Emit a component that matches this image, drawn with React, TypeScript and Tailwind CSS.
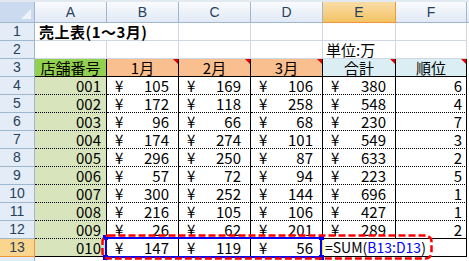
import React from "react";

type Row = [string, number, number, number, number, number];

const data: Row[] = [
  ["001", 105, 169, 106, 380, 6],
  ["002", 172, 118, 258, 548, 4],
  ["003", 96, 66, 68, 230, 7],
  ["004", 174, 274, 101, 549, 3],
  ["005", 296, 250, 87, 633, 2],
  ["006", 57, 72, 94, 223, 5],
  ["007", 300, 252, 144, 696, 1],
  ["008", 216, 105, 106, 427, 1],
  ["009", 26, 62, 201, 289, 2],
];

const JP = "font-['Noto_Sans_CJK_JP',sans-serif] text-[15px] leading-[17px] text-black";
const cell = "box-border h-[18px] shrink-0 border-r border-b flex items-center";

function ColHead({ label, w, active }: { label: string; w: string; active?: boolean }) {
  return (
    <div
      className={`${w} box-border h-full shrink-0 border-r border-b flex items-center justify-center font-['Liberation_Sans',sans-serif] text-[14px] text-[#27415A] ${
        active
          ? "bg-linear-to-b from-[#F9DDA6] to-[#F3C363] border-[#F29536]"
          : "bg-linear-to-b from-[#F9FBFE] to-[#E1E9F5] border-[#9EB6CE]"
      }`}
    >
      {label}
    </div>
  );
}

function RowHead({ n, active }: { n?: number; active?: boolean }) {
  return (
    <div
      className={`w-[35px] ${cell} justify-center font-['Liberation_Sans',sans-serif] text-[14px] text-[#27415A] ${
        active ? "bg-[#F9D58E] border-[#F29536]" : "bg-[#E4ECF7] border-[#9EB6CE]"
      }`}
    >
      {n}
    </div>
  );
}

function Mark() {
  return (
    <span className="absolute right-0 top-0 w-[5px] h-[5px] bg-[#E00000] [clip-path:polygon(0_0,100%_0,100%_100%)]" />
  );
}

function Yen({ v, w, bottom }: { v: number; w: string; bottom: string }) {
  return (
    <div className={`${w} ${cell} ${JP} justify-between pl-[8px] pr-[9px] border-black ${bottom}`}>
      <span>¥</span>
      <span>{v}</span>
    </div>
  );
}

export default function App() {
  const dotted = "[border-bottom-style:dotted]";
  return (
    <div className="relative w-[469px] h-[261px] overflow-hidden bg-white">
      <div className="h-[2px] bg-[#E3E9F1]" />
      {/* column letters */}
      <div className="flex h-[21px]">
        <div className="relative w-[35px] box-border h-full shrink-0 border-r border-b border-[#9EB6CE] bg-[#CBDAEE]">
          <span className="absolute right-[3px] bottom-[3px] w-[10px] h-[10px] bg-[#EEF3FA] [clip-path:polygon(100%_0,100%_100%,0_100%)]" />
        </div>
        <ColHead label="A" w="w-[72px]" />
        <ColHead label="B" w="w-[72px]" />
        <ColHead label="C" w="w-[72px]" />
        <ColHead label="D" w="w-[72px]" />
        <ColHead label="E" w="w-[73px]" active />
        <ColHead label="F" w="w-[71px]" />
        <ColHead label="" w="w-[20px]" />
      </div>

      {/* row 1 */}
      <div className="flex">
        <RowHead n={1} />
        <div className={`w-[144px] ${cell} border-[#D0D7E5] pl-[4px] font-['Noto_Sans_CJK_JP',sans-serif] text-[15px] leading-[17px] font-bold tracking-[0.5px] text-black`}>
          売上表(1～3月)
        </div>
        <div className={`w-[72px] ${cell} border-[#D0D7E5]`} />
        <div className={`w-[72px] ${cell} border-[#D0D7E5]`} />
        <div className={`w-[73px] ${cell} border-[#D0D7E5]`} />
        <div className={`w-[71px] ${cell} border-[#D0D7E5]`} />
      </div>

      {/* row 2 */}
      <div className="flex">
        <RowHead n={2} />
        <div className={`w-[72px] ${cell} border-[#D0D7E5]`} />
        <div className={`w-[72px] ${cell} border-[#D0D7E5]`} />
        <div className={`w-[72px] ${cell} border-[#D0D7E5]`} />
        <div className={`w-[72px] ${cell} border-[#D0D7E5]`} />
        <div className={`w-[73px] ${cell} border-[#D0D7E5] ${JP} pl-[3px]`}>単位:万</div>
        <div className={`w-[71px] ${cell} border-[#D0D7E5]`} />
      </div>

      {/* row 3 */}
      <div className="flex">
        <RowHead n={3} />
        <div className={`w-[72px] ${cell} ${JP} justify-center border-black bg-[#92D050]`}>店舗番号</div>
        {["1月", "2月", "3月"].map((m) => (
          <div key={m} className={`relative w-[72px] ${cell} ${JP} justify-center border-black bg-[#FABF8F]`}>
            {m}
            <Mark />
          </div>
        ))}
        <div className={`relative w-[73px] ${cell} ${JP} justify-center border-black bg-[#DAEEF3]`}>
          合計
          <Mark />
        </div>
        <div className={`relative w-[71px] ${cell} ${JP} justify-center border-black bg-[#DAEEF3]`}>
          順位
          <Mark />
        </div>
      </div>

      {/* rows 4-12 */}
      {data.map((r, i) => {
        const last = i === data.length - 1;
        return (
          <div key={r[0]} className="flex">
            <RowHead n={i + 4} />
            <div className={`w-[72px] ${cell} ${JP} justify-end pr-[5px] border-black bg-[#D8E4BC] ${dotted}`}>{r[0]}</div>
            <Yen v={r[1]} w="w-[72px]" bottom={dotted} />
            <Yen v={r[2]} w="w-[72px]" bottom={dotted} />
            <Yen v={r[3]} w="w-[72px]" bottom={dotted} />
            <Yen v={r[4]} w="w-[73px]" bottom={last ? "" : dotted} />
            <div className={`w-[71px] ${cell} ${JP} justify-end pr-[4px] border-black ${last ? "" : dotted}`}>{r[5]}</div>
          </div>
        );
      })}

      {/* row 13 */}
      <div className="flex">
        <RowHead n={13} active />
        <div className={`w-[72px] ${cell} ${JP} justify-end pr-[5px] border-black bg-[#D8E4BC]`}>010</div>
        <Yen v={147} w="w-[72px]" bottom="" />
        <Yen v={119} w="w-[72px]" bottom="" />
        <div className={`w-[72px] ${cell} ${JP} justify-between pl-[8px] pr-[9px] border-black border-r-[#F2F200]`}>
          <span>¥</span>
          <span>56</span>
        </div>
        <div className={`w-[144px] ${cell} font-['Noto_Sans_CJK_JP',sans-serif] text-[14px] leading-[17px] text-black pl-[2px] border-black whitespace-nowrap`}>
          =SUM(<span className="text-[#0000FF]">B13:D13</span>)
        </div>
      </div>

      {/* row 14 (top edge only) */}
      <div className="flex">
        <RowHead />
        <div className={`w-[72px] ${cell} border-[#D0D7E5]`} />
        <div className={`w-[72px] ${cell} border-[#D0D7E5]`} />
      </div>

      {/* range selection of B13:D13 */}
      <div className="absolute left-[105px] top-[237px] w-[217px] h-[21px] border-2 border-[#0000FF]">
        <span className="absolute -left-[4px] -top-[4px] w-[5px] h-[5px] bg-[#0000FF]" />
        <span className="absolute -right-[4px] -top-[4px] w-[5px] h-[5px] bg-[#0000FF]" />
        <span className="absolute -left-[4px] -bottom-[4px] w-[5px] h-[5px] bg-[#0000FF]" />
        <span className="absolute -right-[4px] -bottom-[4px] w-[5px] h-[5px] bg-[#0000FF]" />
      </div>

      {/* red dashed annotation */}
      <svg className="absolute left-0 top-0" width="469" height="261">
        <rect x="102.5" y="235.5" width="329" height="23" rx="6" fill="none" stroke="#FF0000" strokeWidth="2.5" strokeDasharray="7 3" />
      </svg>
    </div>
  );
}
